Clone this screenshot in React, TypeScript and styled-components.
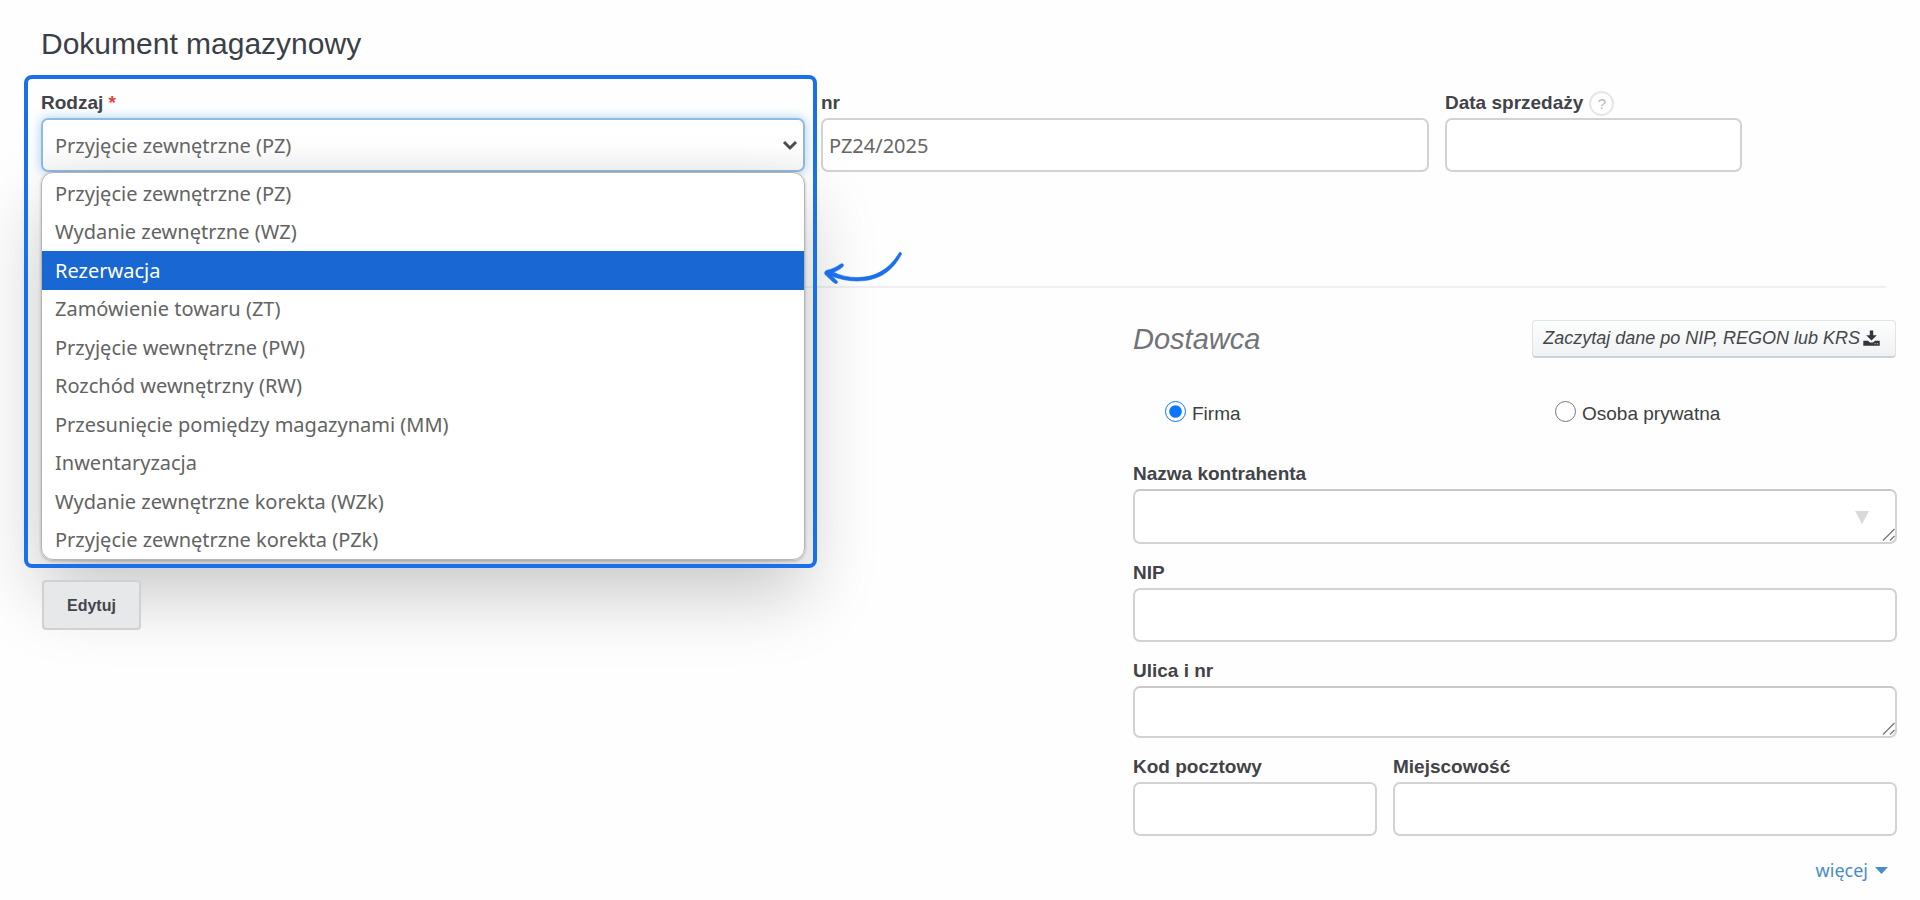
import React, { useId } from "react";
import styled, { createGlobalStyle, css } from "styled-components";

const sans = `"Liberation Sans", Arial, sans-serif`;
const human = `"Noto Sans", Tahoma, sans-serif`;

const GlobalStyle = createGlobalStyle`
  *, *::before, *::after { box-sizing: border-box; }
  body { margin: 0; background: #fefefe; color: #3c3f44; font-family: ${sans}; font-size: 19px; }
`;

const Page = styled.main`
  padding: 16px 23px 16px 41px;
`;

const Title = styled.h1`
  margin: 0 0 14px;
  font-size: 30px;
  line-height: 56px;
  font-weight: 400;
  color: #3a3f47;
`;

const TopRow = styled.div`
  display: grid;
  grid-template-columns: 764fr 608fr 297fr 139fr;
  gap: 16px;
`;

const FieldBox = styled.div`
  position: relative;
  display: flex;
  flex-direction: column;
  min-width: 0;
`;

const LabelRow = styled.div`
  display: flex;
  align-items: center;
  gap: 6px;
  height: 32px;
  padding-top: 2px;
`;

const Label = styled.label`
  font-size: 19px;
  line-height: 30px;
  font-weight: 700;
  color: #424348;
`;

const Required = styled.span`
  color: #e0483c;
`;

const control = css`
  display: block;
  width: 100%;
  height: 54px;
  margin: 0;
  padding: 0 6px;
  border: 2px solid #d2d2d2;
  border-radius: 7px;
  background: #fff;
  color: #666;
  font-family: ${human};
  font-size: 20px;
  outline: none;
`;

const Input = styled.input`
  ${control}
`;

const TextArea = styled.textarea<{ $height: number }>`
  ${control}
  height: ${(p) => p.$height}px;
  padding: 10px 6px;
  border-top-color: #c8c8c8;
  resize: none;
`;

const Select = styled.select`
  ${control}
  padding: 0 32px 0 12px;
  border-color: #8fbbe0;
  background: linear-gradient(#fff 50%, #f6f6f6);
  box-shadow: 0 0 11px rgba(102, 175, 233, 0.6);
  appearance: none;
`;

const ControlWrap = styled.div`
  position: relative;
`;

const Chevron = styled.svg`
  position: absolute;
  right: 7px;
  top: 21px;
  pointer-events: none;
`;

const Grip = styled.svg`
  position: absolute;
  right: 1px;
  bottom: 2px;
  pointer-events: none;
`;

const ComboArrow = styled.svg`
  position: absolute;
  right: 28px;
  top: 22px;
  pointer-events: none;
`;

const Options = styled.ul`
  position: absolute;
  z-index: 2;
  top: 100%;
  left: 0;
  right: 0;
  height: 388px;
  margin: 0;
  padding: 1px 0 0;
  display: flex;
  flex-direction: column;
  list-style: none;
  overflow: hidden;
  border: 1px solid #b4b4b4;
  border-radius: 12px;
  background: #fff;
`;

const OptionsShadow = styled.div`
  position: absolute;
  z-index: 1;
  top: 100%;
  left: 0;
  right: 0;
  height: 388px;
  border-radius: 12px;
  box-shadow: 0 1px 3px rgba(0, 0, 0, 0.25), 0 34px 72px rgba(0, 0, 0, 0.22);
  pointer-events: none;
`;

const Option = styled.li<{ $active: boolean }>`
  flex: 1;
  display: flex;
  align-items: center;
  padding: 0 13px;
  font-family: ${human};
  font-size: 20px;
  color: ${(p) => (p.$active ? "#fff" : "#636363")};
  background: ${(p) => (p.$active ? "#1967d2" : "transparent")};
`;

const Frame = styled.div`
  position: absolute;
  z-index: 3;
  top: -11px;
  left: -17px;
  right: -12px;
  height: 493px;
  border: 4px solid #1a6feb;
  border-radius: 8px;
  pointer-events: none;
`;

const Pointer = styled.svg`
  position: absolute;
  z-index: 3;
  left: calc(100% + 15px);
  top: 160px;
`;

const Help = styled.button`
  width: 25px;
  height: 25px;
  padding: 0;
  border: 2px solid #e6e6e6;
  border-radius: 50%;
  background: #fff;
  color: #b8b8b8;
  font-family: ${sans};
  font-size: 15px;
  line-height: 21px;
`;

const Divider = styled.hr`
  height: 2px;
  margin: 114px 11px 32px 0;
  border: 0;
  background: #f0f0f0;
`;

const Columns = styled.div`
  display: grid;
  grid-template-columns: 764fr 312fr 764fr;
  gap: 8px;
`;

const Issuer = styled.section`
  padding-top: 260px;
`;

const EditButton = styled.button`
  position: relative;
  z-index: 2;
  height: 50px;
  margin-left: 1px;
  padding: 1px 23px 0;
  border: 2px solid #d0d1d2;
  border-radius: 4px;
  background: #e6e8ea;
  color: #45464a;
  font-family: ${sans};
  font-size: 16px;
  font-weight: 700;
`;

const Supplier = styled.section`
  grid-column: 3;
  display: flex;
  flex-direction: column;
  gap: 12px;
`;

const SupplierHead = styled.header`
  display: flex;
  align-items: center;
  justify-content: space-between;
  padding-right: 1px;
`;

const SupplierTitle = styled.h2`
  margin: 0;
  font-size: 29px;
  line-height: 37px;
  font-weight: 400;
  font-style: italic;
  color: #717378;
`;

const FetchButton = styled.button`
  display: flex;
  align-items: center;
  gap: 3px;
  height: 38px;
  padding: 0 15px 0 10px;
  border: 1px solid #e0e2e4;
  border-bottom: 2px solid #cfd2d4;
  border-radius: 4px;
  background: linear-gradient(#fdfefe, #eff1f3);
  color: #45464a;
  font-family: ${sans};
  font-size: 18px;
  font-style: italic;
`;

const Kinds = styled.div`
  display: grid;
  grid-template-columns: 1fr 1fr;
  gap: 16px;
  padding: 28px 0 15px;
`;

const Kind = styled.label`
  display: flex;
  align-items: center;
  gap: 6px;
  padding-left: 32px;
  font-size: 19px;
  line-height: 32px;
`;

const Radio = styled.input`
  width: 21px;
  height: 21px;
  margin: 0 0 6px;
  accent-color: #0a75ff;
`;

const CityRow = styled.div`
  display: grid;
  grid-template-columns: 244fr 504fr;
  gap: 16px;
`;

const More = styled.a`
  display: flex;
  align-items: center;
  align-self: flex-end;
  gap: 7px;
  padding: 8px 9px 0 0;
  color: #4a8cc7;
  font-family: ${human};
  font-size: 18px;
  line-height: 28px;
  text-decoration: none;
`;

const documentKinds = [
  "Przyjęcie zewnętrzne (PZ)",
  "Wydanie zewnętrzne (WZ)",
  "Rezerwacja",
  "Zamówienie towaru (ZT)",
  "Przyjęcie wewnętrzne (PW)",
  "Rozchód wewnętrzny (RW)",
  "Przesunięcie pomiędzy magazynami (MM)",
  "Inwentaryzacja",
  "Wydanie zewnętrzne korekta (WZk)",
  "Przyjęcie zewnętrzne korekta (PZk)",
];

function TextField({ label, value, help }: { label: string; value?: string; help?: boolean }) {
  const id = useId();
  return (
    <FieldBox>
      <LabelRow>
        <Label htmlFor={id}>{label}</Label>
        {help && <Help type="button">?</Help>}
      </LabelRow>
      <Input id={id} type="text" defaultValue={value} />
    </FieldBox>
  );
}

function AreaField({ label, height, combo }: { label: string; height: number; combo?: boolean }) {
  const id = useId();
  return (
    <FieldBox>
      <LabelRow>
        <Label htmlFor={id}>{label}</Label>
      </LabelRow>
      <ControlWrap>
        <TextArea id={id} $height={height} />
        {combo && (
          <ComboArrow width="14" height="13" viewBox="0 0 14 13" aria-hidden="true">
            <path d="M0 0h14L7 13z" fill="#d9d9d9" />
          </ComboArrow>
        )}
        <Grip width="14" height="14" viewBox="0 0 14 14" aria-hidden="true">
          <path d="M1 12.500L12.500 1M8 12.500l4.500-4.500" stroke="#777" strokeWidth="1.300" fill="none" />
        </Grip>
      </ControlWrap>
    </FieldBox>
  );
}

function KindField() {
  return (
    <FieldBox>
      <LabelRow>
        <Label htmlFor="kind">
          Rodzaj <Required>*</Required>
        </Label>
      </LabelRow>
      <ControlWrap>
        <Select id="kind" defaultValue={documentKinds[0]}>
          {documentKinds.map((kind) => (
            <option key={kind}>{kind}</option>
          ))}
        </Select>
        <Chevron width="16" height="13" viewBox="0 0 16 13" aria-hidden="true">
          <path d="M2 3l6 6 6-6" fill="none" stroke="#4d4d4d" strokeWidth="3" />
        </Chevron>
      </ControlWrap>
      <OptionsShadow />
      <Options role="listbox" aria-label="Rodzaj">
        {documentKinds.map((kind) => (
          <Option key={kind} role="option" aria-selected={kind === "Rezerwacja"} $active={kind === "Rezerwacja"}>
            {kind}
          </Option>
        ))}
      </Options>
      <Frame />
      <Pointer width="86" height="42" viewBox="820 246 86 42" aria-hidden="true">
        <path
          d="M899.200 252.800C900 251.500 902 252.500 901.300 254.500C893 270 880 281 857 281C848 281 840 279 832.500 276.500L837 281C838.500 283 836.500 284.300 834.500 283C831 280.500 828 277 825.500 275C824 273.500 824.500 271 827 270.300C831 269.500 836 267.500 840.500 264.200C843 263 844.500 265 842.500 267C839.500 269.500 836.500 271 833.500 272.200C840 275.500 848 277.500 857 277.500C876 277.500 890 268.500 899.200 252.800Z"
          fill="#1a6feb"
          stroke="#1a6feb"
          strokeWidth="0.600"
        />
      </Pointer>
    </FieldBox>
  );
}

export default function App() {
  return (
    <Page>
      <GlobalStyle />
      <Title>Dokument magazynowy</Title>
      <TopRow>
        <KindField />
        <TextField label="nr" value="PZ24/2025" />
        <TextField label="Data sprzedaży" help />
      </TopRow>
      <Divider />
      <Columns>
        <Issuer>
          <EditButton type="button">Edytuj</EditButton>
        </Issuer>
        <Supplier>
          <SupplierHead>
            <SupplierTitle>Dostawca</SupplierTitle>
            <FetchButton type="button">
              Zaczytaj dane po NIP, REGON lub KRS
              <svg width="17" height="17" viewBox="0 0 17 17" aria-hidden="true">
                <path
                  d="M6.800 0.500h3.400v4.700h3.600L8.500 10.500 3.200 5.200h3.600zM0.300 10.700h4.700l2 1.800h3l2-1.800h4.700v5h-16.400z"
                  fill="#333539"
                />
                <path d="M11.500 13.300h1.200v1h-1.200zM13.800 13.300h1.200v1h-1.200z" fill="#c8c8c8" />
              </svg>
            </FetchButton>
          </SupplierHead>
          <Kinds role="radiogroup" aria-label="Dostawca">
            <Kind>
              <Radio type="radio" name="party" defaultChecked />
              Firma
            </Kind>
            <Kind>
              <Radio type="radio" name="party" />
              Osoba prywatna
            </Kind>
          </Kinds>
          <AreaField label="Nazwa kontrahenta" height={55} combo />
          <TextField label="NIP" />
          <AreaField label="Ulica i nr" height={52} />
          <CityRow>
            <TextField label="Kod pocztowy" />
            <TextField label="Miejscowość" />
          </CityRow>
          <More href="#wiecej">
            więcej
            <svg width="13" height="7" viewBox="0 0 13 7" aria-hidden="true">
              <path d="M0 0h13L6.500 7z" fill="#4a8cc7" />
            </svg>
          </More>
        </Supplier>
      </Columns>
    </Page>
  );
}
